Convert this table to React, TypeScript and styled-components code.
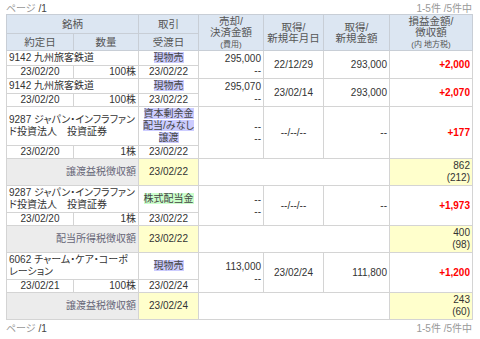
import React from "react";
import styled, {createGlobalStyle} from "styled-components";

const GlobalStyle = createGlobalStyle`
body {
    margin: 0;
    background: #fff;
    font-family: "Liberation Sans", "Noto Sans CJK JP", sans-serif;
    color: #333;
}
`
const Page = styled.div`
    width: 466px;
    padding: 0 8px 0 6px;
`
const PagerBar = styled.div`
    display: flex;
    justify-content: space-between;
    align-items: center;
    height: 14px;
    font-size: 10px;
    color: #999;
    font-feature-settings: "palt";
`
const PageNo = styled.span`
    color: #444;
`
const Table = styled.table`
    width: 466px;
    border-collapse: collapse;
    table-layout: fixed;
    font-size: 10px;
    line-height: 12px;
    font-feature-settings: "palt";
`
const HeadCell = styled.th<{ $h?: number }>`
    background: #dce6f2;
    color: #555;
    font-weight: normal;
    font-size: 10.5px;
    line-height: 11px;
    border: 1px solid #c8ced6;
    padding: 0 2px;
    height: ${p => p.$h || 16}px;
    text-align: center;
`
const Small = styled.span`
    font-size: 8px;
`
type Tone = "plain" | "label" | "yellow";
const Cell = styled.td<{ $align?: string; $tone?: Tone; $tight?: boolean }>`
    border: 1px solid #d4d4d4;
    padding: ${p => p.$tight ? "0 2px" : "1px 2px"};
    text-align: ${p => p.$align || "left"};
    vertical-align: middle;
    white-space: normal;
    background: ${p => p.$tone === "label" ? "#ececec" : p.$tone === "yellow" ? "#ffffcc" : "#fff"};
    color: ${p => p.$tone === "label" ? "#667" : "#333"};
`
const Tag = styled.span<{ $kind: "sell" | "div" }>`
    background: ${p => p.$kind === "div" ? "#ccffcc" : "#ccccff"};
    color: #444;
`
const Gain = styled.span`
    color: #ff0000;
    font-weight: bold;
`

type Entry = {
    name: string;
    trade: React.ReactNode;
    kind: "sell" | "div";
    amount: string;
    acqDate: string;
    acqAmount: string;
    gain: string;
    tradeDate: string;
    qty: string;
    settle: string;
    tax?: { label: string; date: string; total: string; local: string };
}

const entries: Entry[] = [
    {
        name: "9142 九州旅客鉄道", trade: "現物売", kind: "sell", amount: "295,000", acqDate: "22/12/29",
        acqAmount: "293,000", gain: "+2,000", tradeDate: "23/02/20", qty: "100株", settle: "23/02/22"
    },
    {
        name: "9142 九州旅客鉄道", trade: "現物売", kind: "sell", amount: "295,070", acqDate: "23/02/14",
        acqAmount: "293,000", gain: "+2,070", tradeDate: "23/02/20", qty: "100株", settle: "23/02/22"
    },
    {
        name: "9287 ジャパン・インフラファンド投資法人　投資証券",
        trade: <>資本剰余金<br/>配当/みなし<br/>譲渡</>, kind: "sell", amount: "--", acqDate: "--/--/--",
        acqAmount: "--", gain: "+177", tradeDate: "23/02/20", qty: "1株", settle: "23/02/22",
        tax: {label: "譲渡益税徴収額", date: "23/02/22", total: "862", local: "(212)"}
    },
    {
        name: "9287 ジャパン・インフラファンド投資法人　投資証券", trade: "株式配当金", kind: "div", amount: "--",
        acqDate: "--/--/--", acqAmount: "--", gain: "+1,973", tradeDate: "23/02/20", qty: "1株", settle: "23/02/22",
        tax: {label: "配当所得税徴収額", date: "23/02/22", total: "400", local: "(98)"}
    },
    {
        name: "6062 チャーム・ケア・コーポレーション", trade: "現物売", kind: "sell", amount: "113,000",
        acqDate: "23/02/24", acqAmount: "111,800", gain: "+1,200", tradeDate: "23/02/21", qty: "100株", settle: "23/02/24",
        tax: {label: "譲渡益税徴収額", date: "23/02/24", total: "243", local: "(60)"}
    },
]

const widths = [67, 65, 60, 65, 60, 66, 83];

const Pager = () => (
    <PagerBar>
        <span>ページ <PageNo>/1</PageNo></span>
        <span>1-5件 /5件中</span>
    </PagerBar>
)

const EntryRows = ({e}: { e: Entry }) => (
    <>
        <tr>
            <Cell colSpan={2}>{e.name}</Cell>
            <Cell $align="center"><Tag $kind={e.kind}>{e.trade}</Tag></Cell>
            <Cell rowSpan={2} $align="right">{e.amount}<br/>--</Cell>
            <Cell rowSpan={2} $align="center">{e.acqDate}</Cell>
            <Cell rowSpan={2} $align="right">{e.acqAmount}</Cell>
            <Cell rowSpan={2} $align="right"><Gain>{e.gain}</Gain></Cell>
        </tr>
        <tr>
            <Cell $tight $align="center">{e.tradeDate}</Cell>
            <Cell $tight $align="right">{e.qty}</Cell>
            <Cell $tight $align="center">{e.settle}</Cell>
        </tr>
        {e.tax && (
            <tr>
                <Cell colSpan={2} $align="right" $tone="label">{e.tax.label}</Cell>
                <Cell $align="center" $tone="yellow">{e.tax.date}</Cell>
                <Cell colSpan={3}/>
                <Cell $align="right" $tone="yellow">{e.tax.total}<br/>{e.tax.local}</Cell>
            </tr>
        )}
    </>
)

const App = () => {
    return (<Page>
        <GlobalStyle/>
        <Pager/>
        <Table>
            <colgroup>
                {widths.map((w, i) => <col key={i} style={{width: w}}/>)}
            </colgroup>
            <thead>
            <tr>
                <HeadCell colSpan={2} $h={18}>銘柄</HeadCell>
                <HeadCell $h={18}>取引</HeadCell>
                <HeadCell rowSpan={2}>売却/<br/>決済金額<br/><Small>(費用)</Small></HeadCell>
                <HeadCell rowSpan={2}>取得/<br/>新規年月日</HeadCell>
                <HeadCell rowSpan={2}>取得/<br/>新規金額</HeadCell>
                <HeadCell rowSpan={2}>損益金額/<br/>徴収額<br/><Small>(内 地方税)</Small></HeadCell>
            </tr>
            <tr>
                <HeadCell>約定日</HeadCell>
                <HeadCell>数量</HeadCell>
                <HeadCell>受渡日</HeadCell>
            </tr>
            </thead>
            <tbody>
            {entries.map((e, i) => <EntryRows key={i} e={e}/>)}
            </tbody>
        </Table>
        <Pager/>
    </Page>)
}

export default App
